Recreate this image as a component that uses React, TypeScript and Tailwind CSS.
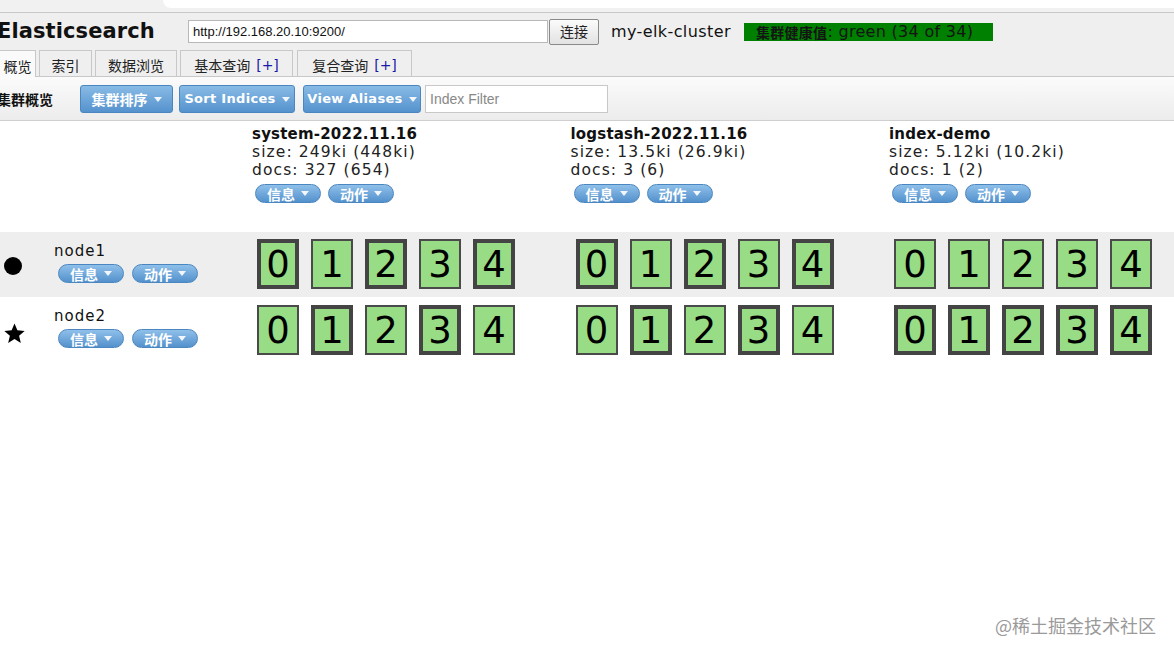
import React from "react";

const font = { fontFamily: '"DejaVu Sans", Verdana, "Noto Sans CJK SC", sans-serif' };
const cjk = { fontFamily: '"Noto Sans CJK SC", "DejaVu Sans", sans-serif' };

type Index = { name: string; size: string; docs: string; primaries: boolean[][] };

const indices: Index[] = [
  {
    name: "system-2022.11.16",
    size: "size: 249ki (448ki)",
    docs: "docs: 327 (654)",
    primaries: [
      [true, false, true, false, true],
      [false, true, false, true, false],
    ],
  },
  {
    name: "logstash-2022.11.16",
    size: "size: 13.5ki (26.9ki)",
    docs: "docs: 3 (6)",
    primaries: [
      [true, false, true, false, true],
      [false, true, false, true, false],
    ],
  },
  {
    name: "index-demo",
    size: "size: 5.12ki (10.2ki)",
    docs: "docs: 1 (2)",
    primaries: [
      [false, false, false, false, false],
      [true, true, true, true, true],
    ],
  },
];

const Caret = () => (
  <span className="ml-[6px] inline-block h-0 w-0 border-x-[4px] border-t-[5px] border-x-transparent border-t-white opacity-90" />
);

const ToolButton = ({ label, w }: { label: string; w: string }) => {
  const latin = /[a-z]/i.test(label);
  return (
    <button
      className={`flex h-[28px] ${w} items-center justify-center rounded-[3px] border border-[#4a86bf] bg-gradient-to-b from-[#88bbe6] to-[#5592cd] font-bold text-white ${
        latin ? "text-[13px] tracking-[0.3px]" : "text-[14px]"
      }`}
      style={latin ? font : cjk}
    >
      {label}
      <Caret />
    </button>
  );
};

const Pill = ({ label }: { label: string }) => (
  <button
    className="flex h-[19px] w-[66px] items-center justify-center rounded-full border border-[#4a86bf] bg-gradient-to-b from-[#8fc0ea] to-[#5391cc] text-[14px] font-bold leading-none text-white"
    style={cjk}
  >
    {label}
    <Caret />
  </button>
);

const Shard = ({ n, primary }: { n: number; primary: boolean }) => (
  <div
    className={`flex h-[50px] w-[42px] items-center justify-center bg-[#98dc86] text-[37px] leading-none text-black ${
      primary ? "border-[4px] border-[#444444]" : "border-[2px] border-[#4a4a4a]"
    }`}
    style={font}
  >
    {n}
  </div>
);

const Tab = ({ label, plus, active, w }: { label: string; plus?: boolean; active?: boolean; w: string }) => (
  <div
    className={`flex ${w} items-center justify-center border border-b-0 border-[#c8c8c8] pt-[4px] text-[14px] text-[#222] ${
      active ? "-mb-px h-[27px] bg-[#fafafa]" : "h-[26px] bg-[#efefef]"
    }`}
    style={cjk}
  >
    {label}
    {plus && (
      <span className="ml-[6px] text-[#1a1aa8]" style={font}>
        [+]
      </span>
    )}
  </div>
);

export default function App() {
  return (
    <div className="h-[657px] w-[1174px] overflow-hidden bg-white text-[#111]" style={font}>
      {/* top strip */}
      <div className="flex h-[13px] border-b border-[#c8c8c8] bg-[#f1f1f1]">
        <div className="ml-[163px] h-[8px] flex-1 rounded-bl-[12px] bg-white" />
      </div>

      {/* header */}
      <div className="bg-[#efefef]">
        <div className="flex h-[38px] items-center pb-[1px]">
          <div className="-ml-[3px] w-[191px] text-[21px] font-bold tracking-[0.1px] text-[#111]">
            Elasticsearch
          </div>
          <input
            readOnly
            value="http://192.168.20.10:9200/"
            className="h-[23px] w-[360px] border border-[#b8b8b8] bg-white px-[4px] text-[13px] text-[#111] outline-none"
            style={{ fontFamily: '"Liberation Sans", Arial, sans-serif' }}
          />
          <button
            className="ml-[1px] h-[26px] w-[50px] rounded-[2px] border border-[#8a8a8a] bg-gradient-to-b from-[#fbfbfb] to-[#e2e2e2] text-[14px] text-[#222]"
            style={cjk}
          >
            连接
          </button>
          <div className="ml-[12px] text-[16px] tracking-[0.4px] text-[#111]">my-elk-cluster</div>
          <div className="ml-[13px] flex h-[18px] w-[249px] items-center bg-[#008000] pl-[12px] text-[16px] leading-none tracking-[0.3px] text-[#141414]">
            <span style={cjk} className="text-[14px] font-bold">
              集群健康值
            </span>
            <span>: green (34 of 34)</span>
          </div>
        </div>
        <div className="flex h-[26px] items-end gap-[3px] border-b border-[#c8c8c8]">
          <Tab label="概览" active w="w-[37px] -ml-[1px]" />
          <Tab label="索引" w="w-[53px]" />
          <Tab label="数据浏览" w="w-[82px]" />
          <Tab label="基本查询" plus w="w-[113px]" />
          <Tab label="复合查询" plus w="w-[115px] ml-[1px]" />
        </div>
      </div>

      {/* toolbar */}
      <div className="flex h-[44px] items-center border-b border-[#cfcfcf] bg-gradient-to-b from-[#fbfbfb] to-[#ececec] pt-[1px]">
        <div className="-ml-[3px] w-[83px] text-[14px] font-bold" style={cjk}>
          集群概览
        </div>
        <ToolButton label="集群排序" w="w-[93px]" />
        <div className="w-[6px]" />
        <ToolButton label="Sort Indices" w="w-[116px]" />
        <div className="w-[8px]" />
        <ToolButton label="View Aliases" w="w-[118px]" />
        <input
          readOnly
          placeholder="Index Filter"
          className="ml-[4px] h-[28px] w-[183px] border border-[#c8c8c8] bg-white px-[4px] text-[14px] outline-none placeholder:text-[#888]"
          style={{ fontFamily: '"Liberation Sans", Arial, sans-serif' }}
        />
      </div>

      {/* index headers */}
      <div className="flex h-[111px]">
        <div className="w-[252px] shrink-0" />
        {indices.map((ix) => (
          <div key={ix.name} className="w-[318.5px] shrink-0 pt-[4px]">
            <div className="text-[15px] font-bold leading-[18px] tracking-[0.2px]">{ix.name}</div>
            <div className="text-[15.5px] leading-[18px] tracking-[1.1px] text-[#222]">{ix.size}</div>
            <div className="text-[15.5px] leading-[18px] tracking-[1.1px] text-[#222]">{ix.docs}</div>
            <div className="mt-[5px] flex gap-[7px] pl-[3px]">
              <Pill label="信息" />
              <Pill label="动作" />
            </div>
          </div>
        ))}
      </div>

      {/* node rows */}
      {["node1", "node2"].map((node, r) => (
        <div key={node} className={`flex h-[65px] ${r === 0 ? "bg-[#eeeeee]" : "bg-white"}`}>
          <div className="flex w-[252px] shrink-0 items-start">
            <div className="flex w-[54px] shrink-0 justify-start pl-[4px] pt-[25px]">
              {r === 0 ? (
                <div className="h-[18px] w-[18px] rounded-full bg-black" />
              ) : (
                <svg width="23" height="23" viewBox="0 0 24 24" className="-ml-[1px]">
                  <path d="M12 1.5l3 7.2 7.6.6-5.8 5 1.8 7.5L12 17.8l-6.6 4 1.8-7.5-5.8-5 7.6-.6z" fill="#000" />
                </svg>
              )}
            </div>
            <div className="pt-[10px]">
              <div className="text-[15px] leading-[18px] tracking-[1px]">{node}</div>
              <div className="mt-[4px] flex gap-[8px] pl-[4px]">
                <Pill label="信息" />
                <Pill label="动作" />
              </div>
            </div>
          </div>
          {indices.map((ix) => (
            <div key={ix.name} className={`flex w-[318.5px] shrink-0 gap-[12px] pl-[5px] ${r === 0 ? "pt-[7px]" : "pt-[8px]"}`}>
              {ix.primaries[r].map((p, i) => (
                <Shard key={i} n={i} primary={p} />
              ))}
            </div>
          ))}
        </div>
      ))}

      {/* watermark */}
      <div className="flex justify-end pr-[18px] pt-[250px]">
        <div className="text-[18px] text-[#9a9a9a]" style={cjk}>
          @稀土掘金技术社区
        </div>
      </div>
    </div>
  );
}
